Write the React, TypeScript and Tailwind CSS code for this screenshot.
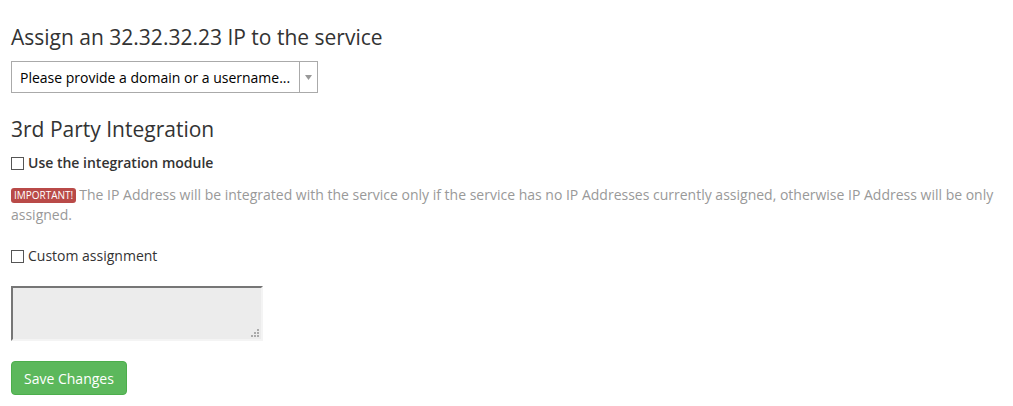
import React from "react"

export default function App() {
  return (
    <div
      className="w-[1013px] h-[406px] bg-white px-[11px] pt-[22px] text-[14px] text-[#333]"
      style={{ fontFamily: '"Open Sans", sans-serif' }}
    >
      {/* IP assignment */}
      <h3 className="text-[21px] leading-[30px] font-normal">Assign an 32.32.32.23 IP to the service</h3>
      <div className="mt-[9px] flex h-[32px] w-[307px] border border-[#aaa] bg-white">
        <div className="flex flex-1 items-center pl-[8px] text-[14px] text-black truncate">
          Please provide a domain or a username...
        </div>
        <div className="flex w-[18px] items-center justify-center border-l border-[#aaa]">
          <svg width="7" height="5" viewBox="0 0 7 5">
            <path d="M0 0 L7 0 L3.5 5 Z" fill="#999" />
          </svg>
        </div>
      </div>

      {/* 3rd party */}
      <h3 className="mt-[21px] text-[21px] leading-[30px] font-normal">3rd Party Integration</h3>
      <label className="mt-[9px] flex items-center gap-[4px] font-semibold leading-[20px]">
        <span className="inline-block h-[13px] w-[13px] border border-[#555] bg-white" />
        Use the integration module
      </label>
      <p className="mt-[12px] leading-[20px] text-[#999]">
        <span className="mr-[3px] inline-block rounded-[3px] bg-[#b94a48] px-[3px] align-[1px] text-[10px] leading-[15px] text-white">
          IMPORTANT!
        </span>
        The IP Address will be integrated with the service only if the service has no IP Addresses currently assigned, otherwise IP Address will be only assigned.
      </p>

      <label className="mt-[21px] flex items-center gap-[4px] leading-[20px]">
        <span className="inline-block h-[13px] w-[13px] border border-[#555] bg-white" />
        Custom assignment
      </label>

      <div className="relative mt-[20px] h-[55px] w-[252px] border-[2px] border-t-[#767676] border-l-[#767676] border-r-[#f4f4f4] border-b-[#f4f4f4] bg-[#ececec]">
        <svg className="absolute right-[2px] bottom-[2px]" width="8" height="8" viewBox="0 0 8 8">
          <rect x="6" y="0" width="2" height="2" fill="#aaa" />
          <rect x="3" y="3" width="2" height="2" fill="#aaa" />
          <rect x="6" y="3" width="2" height="2" fill="#aaa" />
          <rect x="0" y="6" width="2" height="2" fill="#aaa" />
          <rect x="3" y="6" width="2" height="2" fill="#aaa" />
          <rect x="6" y="6" width="2" height="2" fill="#aaa" />
        </svg>
      </div>

      <button className="mt-[20px] h-[34px] rounded-[4px] border border-[#4cae4c] bg-[#5cb85c] px-[12px] text-[14px] text-white">
        Save Changes
      </button>
    </div>
  )
}
